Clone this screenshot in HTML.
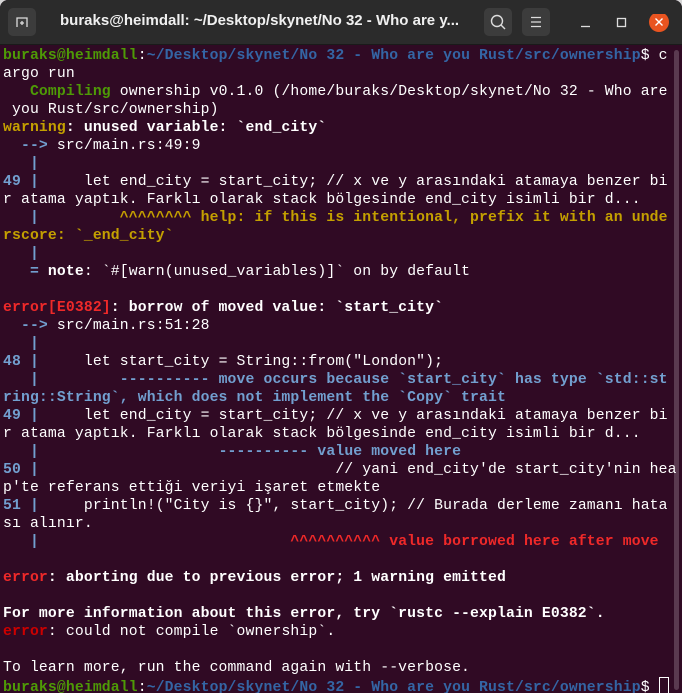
<!DOCTYPE html>
<html><head><meta charset="utf-8"><style>
html,body{margin:0;padding:0;width:682px;height:693px;overflow:hidden;background:#d6d6d6;}
#win{position:absolute;left:0;top:0;width:682px;height:693px;background:#300a24;border-radius:8px 8px 0 0;overflow:hidden;}
#title{position:absolute;left:0;top:0;width:682px;height:44px;background:#2b2b2b;border-bottom:1px solid #1a1a1a;}
#title .t{position:absolute;left:60px;top:12px;color:#f0f0f0;font:bold 15px "Liberation Sans",sans-serif;}
.btn{position:absolute;top:8px;width:28px;height:28px;background:#3c3c3c;border-radius:5px;}
#term{position:absolute;left:3px;top:47px;font-family:"Liberation Mono","DejaVu Sans Mono",monospace;font-size:14.75px;letter-spacing:0.13px;line-height:18px;color:#ffffff;white-space:pre;}
b{font-weight:bold;}
.g{color:#4e9a06;font-weight:bold}
.bl{color:#3465a4;font-weight:bold}
.lb{color:#729fcf;font-weight:bold}
.y{color:#c4a000;font-weight:bold}
.r{color:#ef2929;font-weight:bold}
.rd{color:#cc0000;}
#sb{position:absolute;right:3px;top:50px;width:5px;height:640px;background:#5a3a50;border-radius:3px;}
</style></head><body>
<div id="win">
<div id="title">
<div class="btn" style="left:8px"><svg width="28" height="28"><path d="M9 19V10h10v9M12 15h4M14 13v4" stroke="#ddd" stroke-width="1.3" fill="none"/></svg></div>
<div class="t">buraks@heimdall: ~/Desktop/skynet/No 32 - Who are y...</div>
<div class="btn" style="left:484px"><svg width="28" height="28"><circle cx="13" cy="13" r="5.5" stroke="#ddd" stroke-width="1.4" fill="none"/><path d="M17 17l4 4" stroke="#ddd" stroke-width="1.4"/></svg></div>
<div class="btn" style="left:522px"><svg width="28" height="28"><path d="M9 9.5h10M9 14h10M9 18.5h10" stroke="#ddd" stroke-width="1.3"/></svg></div>
<svg style="position:absolute;left:580px;top:14px" width="90" height="20"><path d="M1 12.5h9" stroke="#ddd" stroke-width="1.3"/><rect x="37.5" y="4.5" width="8" height="8" stroke="#ddd" stroke-width="1.3" fill="none"/><circle cx="79" cy="8" r="10" fill="#e95420"/><path d="M75.5 4.5l7 7M82.5 4.5l-7 7" stroke="#fff" stroke-width="1.4"/></svg>
</div>
<div id="sb"></div>
<div id="term"><span class="g">buraks@heimdall</span>:<span class="bl">~/Desktop/skynet/No 32 - Who are you Rust/src/ownership</span>$ c
argo run
   <span class="g">Compiling</span> ownership v0.1.0 (/home/buraks/Desktop/skynet/No 32 - Who are
 you Rust/src/ownership)
<span class="y">warning</span><b>: unused variable: `end_city`</b>
  <span class="lb">--&gt;</span> src/main.rs:49:9
   <span class="lb">|</span>
<span class="lb">49 |</span>     let end_city = start_city; // x ve y arasındaki atamaya benzer bi
r atama yaptık. Farklı olarak stack bölgesinde end_city isimli bir d...
   <span class="lb">|</span>         <span class="y">^^^^^^^^ help: if this is intentional, prefix it with an unde
rscore: `_end_city`</span>
   <span class="lb">|</span>
   <span class="lb">=</span> <b>note</b>: `#[warn(unused_variables)]` on by default

<span class="r">error[E0382]</span><b>: borrow of moved value: `start_city`</b>
  <span class="lb">--&gt;</span> src/main.rs:51:28
   <span class="lb">|</span>
<span class="lb">48 |</span>     let start_city = String::from("London");
   <span class="lb">|</span>         <span class="lb">---------- move occurs because `start_city` has type `std::st
ring::String`, which does not implement the `Copy` trait</span>
<span class="lb">49 |</span>     let end_city = start_city; // x ve y arasındaki atamaya benzer bi
r atama yaptık. Farklı olarak stack bölgesinde end_city isimli bir d...
   <span class="lb">|</span>                    <span class="lb">---------- value moved here</span>
<span class="lb">50 |</span>                                 // yani end_city'de start_city'nin hea
p'te referans ettiği veriyi işaret etmekte
<span class="lb">51 |</span>     println!("City is {}", start_city); // Burada derleme zamanı hata
sı alınır.
   <span class="lb">|</span>                            <span class="r">^^^^^^^^^^ value borrowed here after move</span>

<span class="r">error</span><b>: aborting due to previous error; 1 warning emitted</b>

<b>For more information about this error, try `rustc --explain E0382`.</b>
<span class="rd" style="font-weight:bold">error</span>: could not compile `ownership`.

To learn more, run the command again with --verbose.
<span class="g">buraks@heimdall</span>:<span class="bl">~/Desktop/skynet/No 32 - Who are you Rust/src/ownership</span>$ <span style="display:inline-block;width:8px;height:16px;border:1px solid #fff;vertical-align:-4px"></span></div>
</div>
</body></html>
